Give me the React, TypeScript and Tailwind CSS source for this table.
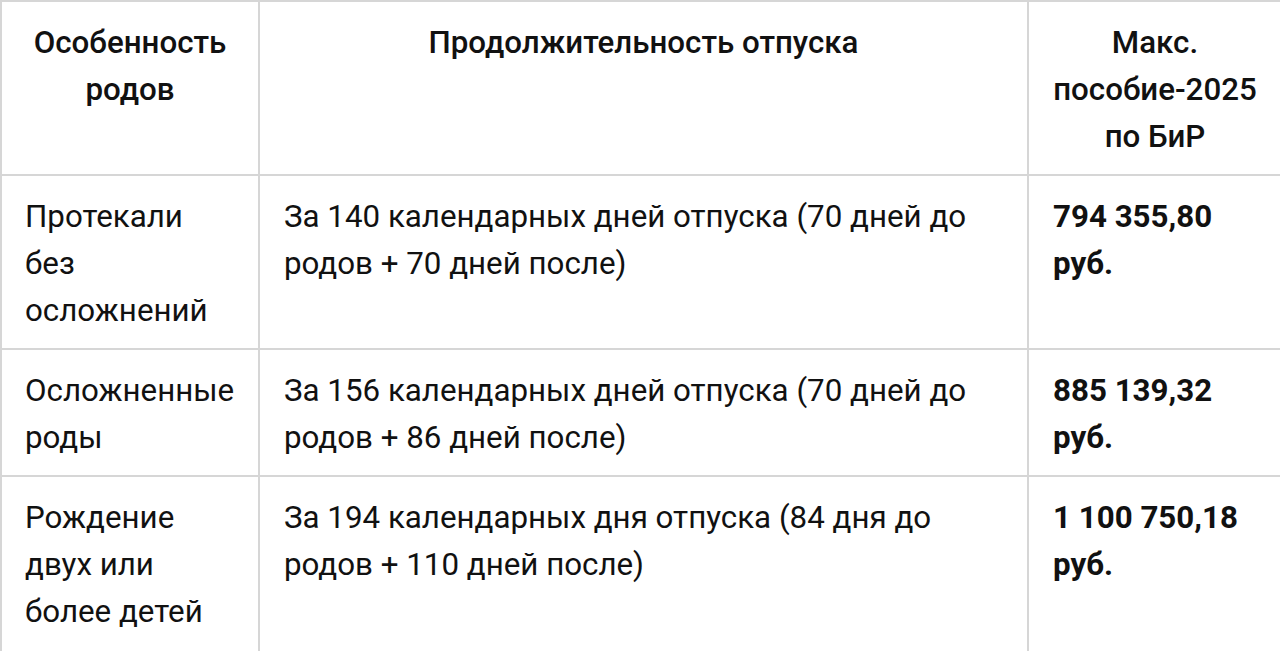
import React from "react";

const rows = [
  {
    a: "Протекали без осложнений",
    b: "За 140 календарных дней отпуска (70 дней до родов + 70 дней после)",
    c: "794 355,80 руб.",
  },
  {
    a: "Осложненные роды",
    b: "За 156 календарных дней отпуска (70 дней до родов + 86 дней после)",
    c: "885 139,32 руб.",
  },
  {
    a: "Рождение двух или более детей",
    b: "За 194 календарных дня отпуска (84 дня до родов + 110 дней после)",
    c: "1 100 750,18 руб.",
  },
];

export default function App() {
  return (
    <div
      className="w-[1280px] h-[651px] overflow-hidden bg-white text-[#111]"
      style={{ fontFamily: "Roboto, 'Noto Sans', sans-serif" }}
    >
      <table className="table-fixed border-collapse w-[1281px] text-[31.3px] leading-[47px]">
        <colgroup>
          <col className="w-[258px]" />
          <col className="w-[769px]" />
          <col className="w-[254px]" />
        </colgroup>
        <thead>
          <tr>
            <th className="border-2 border-[#d6d6d6] px-[20px] pt-[17px] pb-[14px] align-top text-center font-medium">
              Особенность родов
            </th>
            <th className="border-2 border-[#d6d6d6] px-[20px] pt-[17px] pb-[14px] align-top text-center font-medium">
              Продолжительность отпуска
            </th>
            <th className="border-2 border-[#d6d6d6] px-[20px] pt-[17px] pb-[14px] align-top text-center font-medium">
              Макс. пособие-2025 по БиР
            </th>
          </tr>
        </thead>
        <tbody>
          {rows.map((r, i) => {
            const pb = i === rows.length - 1 ? "pb-[30px]" : "pb-[14px]";
            return (
              <tr key={i}>
                <td className={`border-2 border-[#d6d6d6] pl-[23px] pr-[18px] pt-[17px] ${pb} align-top`}>
                  {r.a}
                </td>
                <td className={`border-2 border-[#d6d6d6] pl-[24px] pr-[20px] pt-[17px] ${pb} align-top`}>
                  {r.b}
                </td>
                <td className={`border-2 border-[#d6d6d6] pl-[24px] pr-[16px] pt-[17px] ${pb} align-top font-bold`}>
                  {r.c}
                </td>
              </tr>
            );
          })}
        </tbody>
      </table>
    </div>
  );
}
